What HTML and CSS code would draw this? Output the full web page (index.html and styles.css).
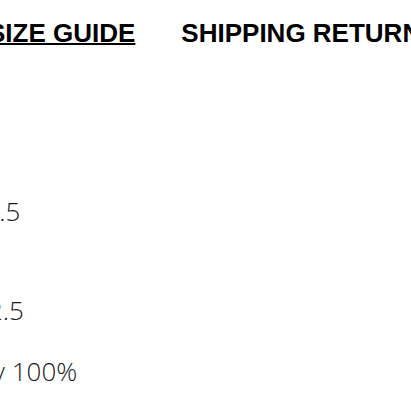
FILE: index.html
```html
<!DOCTYPE html>
<html lang="en">
<head>
<meta charset="UTF-8">
<title>Product details</title>
<meta name="viewport" content="width=device-width, initial-scale=1">
<link rel="stylesheet" href="styles.css">
</head>
<body>
  <div class="page">
    <nav class="tabs">
      <a href="#size" class="tab active">SIZE GUIDE</a>
      <a href="#shipping" class="tab">SHIPPING RETURNS</a>
    </nav>

    <div class="specs">
      <p class="spec first">Sole 1.5</p>
      <p class="spec">Heel 2.5</p>
      <p class="spec">quality 100%</p>
    </div>
  </div>
</body>
</html>
```

FILE: styles.css
```css
:root{
  --ink:#000;
  --text:#1a1a1a;
}
html, body{ margin:0; padding:0; background:#fff; overflow:hidden; }
body{ width:411px; height:411px; }
.page{ white-space:nowrap; }

.tabs{
  display:flex; gap:46px;
  margin-left:-12px; padding-top:18px;
}
.tab{
  font-family:"Liberation Sans", Arial, sans-serif;
  font-size:26px; font-weight:700; line-height:30px;
  color:var(--ink); text-decoration:none;
}
.tab.active{ text-decoration:underline; text-decoration-thickness:2px; text-underline-offset:1px; }

.specs{
  margin-left:-72px; padding-top:148px;
  font-family:"Open Sans", sans-serif;
  font-size:26px; font-weight:300; line-height:31px;
  color:var(--text);
}
.spec{ margin:0 0 30px; }
.spec.first{ margin-bottom:68px; }
```
